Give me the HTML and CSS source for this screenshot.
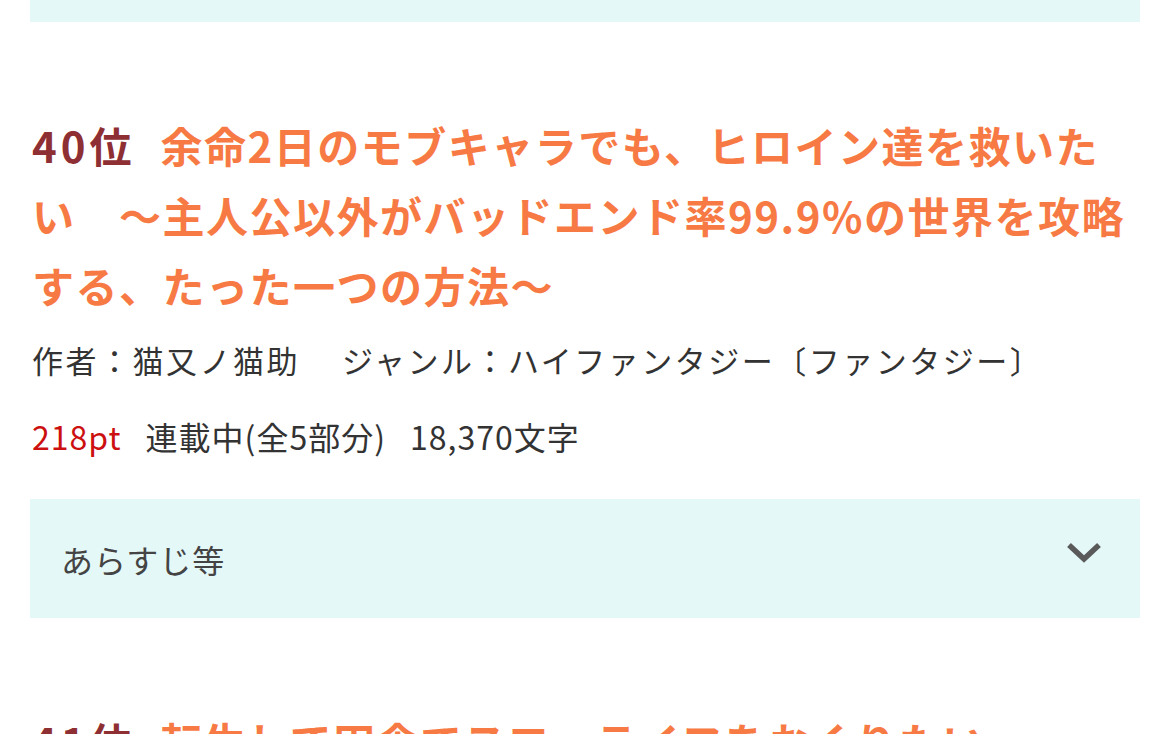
FILE: index.html
```html
<!DOCTYPE html>
<html lang="ja">
<head>
<meta charset="utf-8">
<link rel="stylesheet" href="styles.css">
</head>
<body>
<div class="list">
  <div class="item">
    <div class="summary"></div>
  </div>
  <div class="item">
    <div class="title"><span class="rank">40位</span><span class="name">余命2日のモブキャラでも、ヒロイン達を救いたい　〜主人公以外がバッドエンド率99.9%の世界を攻略する、たった一つの方法〜</span></div>
    <div class="meta"><span class="author">作者：猫又ノ猫助</span><span class="genre">ジャンル：ハイファンタジー〔ファンタジー〕</span></div>
    <div class="stats"><span class="pt">218pt</span><span class="status">連載中(全5部分)</span><span class="chars">18,370文字</span></div>
    <div class="summary open-row">
      <span class="summary-label">あらすじ等</span>
      <svg class="chev" width="36" height="24" viewBox="0 0 36 24"><path d="M3 4 L18 18 L33 4" fill="none" stroke="#5a5a5a" stroke-width="5.5"/></svg>
    </div>
  </div>
  <div class="item">
    <div class="title"><span class="rank">41位</span><span class="name">転生して田舎でスローライフをおくりたい</span></div>
  </div>
</div>
</body>
</html>
```

FILE: styles.css
```css
html, body {
  margin: 0;
  padding: 0;
  background: #ffffff;
  overflow: hidden;
}
body {
  font-family: "Noto Sans CJK JP", "Noto Sans", sans-serif;
  color: #333333;
}
.list {
  display: flex;
  flex-direction: column;
  gap: 88px;
  padding: 0 30px;
  margin-top: -97px;
}
.item {
  display: flex;
  flex-direction: column;
}
.summary {
  background: #e4f8f8;
  height: 119px;
  flex: none;
}
.title {
  font-size: 42px;
  line-height: 70px;
  font-weight: 700;
  letter-spacing: 1.5px;
  padding-left: 2px;
}
.rank {
  color: #8e2f33;
  margin-right: 25px;
  letter-spacing: 4px;
}
.name {
  color: #f77a45;
}
.meta {
  margin-top: 20px;
  font-size: 31px;
  line-height: 40px;
  letter-spacing: 2.5px;
  padding-left: 2px;
  color: #333;
}
.genre {
  margin-left: 42px;
}
.stats {
  margin-top: 36px;
  font-size: 32px;
  line-height: 40px;
  letter-spacing: 1px;
  padding-left: 2px;
  display: flex;
  gap: 24px;
  color: #333;
}
.pt {
  color: #cc1010;
}
.open-row {
  margin-top: 43px;
  display: flex;
  align-items: center;
  justify-content: space-between;
  padding: 0 38px 0 31px;
  box-sizing: border-box;
}
.summary-label {
  font-size: 32px;
  line-height: 40px;
  color: #444;
  letter-spacing: 1px;
}
.chev {
  margin-bottom: 12px;
}
```
